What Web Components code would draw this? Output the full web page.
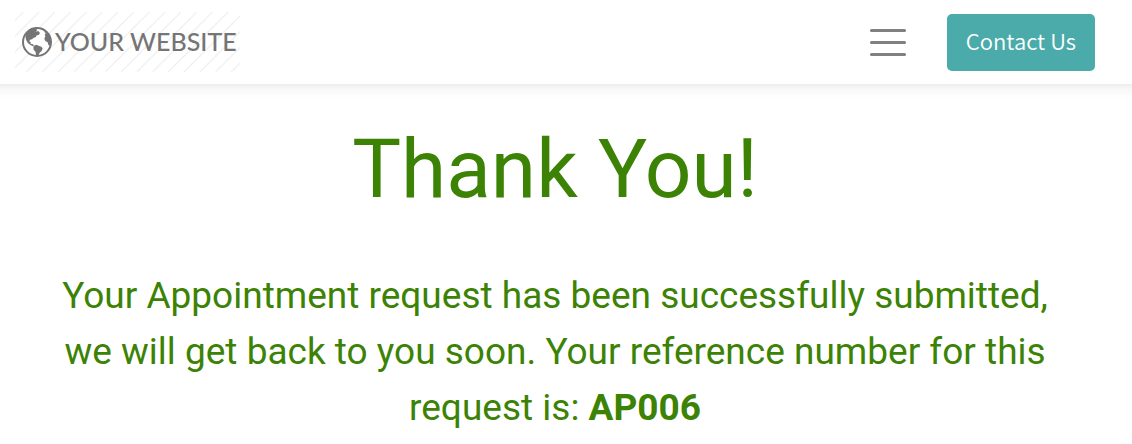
<!DOCTYPE html>
<html lang="en">
<head>
<meta charset="utf-8">
<meta name="viewport" content="width=device-width, initial-scale=1">
<title>Thank You</title>
<style>
body { margin: 0; background: #fff; font-family: Roboto, "Liberation Sans", sans-serif; }
.reference { white-space: nowrap; }
</style>
</head>
<body>
<site-header>
  <site-logo slot="brand">YOUR WEBSITE</site-logo>
  <menu-toggle></menu-toggle>
  <contact-button>Contact Us</contact-button>
</site-header>
<thank-you-message>
  <span slot="title">Thank You!</span>
  Your Appointment request has been successfully submitted, we will get back to you soon. Your reference number for this
  <span class="reference">request is: <b>AP006</b></span>
</thank-you-message>
<script>
function define(name, html) {
  customElements.define(name, class extends HTMLElement {
    constructor() {
      super();
      this.attachShadow({ mode: "open" }).innerHTML = html;
    }
  });
}

define("site-header", `
<style>
:host { display: block; }
:host::after { content: ""; display: block; height: 14px; background: linear-gradient(#eee, #f8f8f8 40%, #fff); }
header { display: flex; align-items: center; justify-content: space-between; box-sizing: border-box; min-height: 84px; padding: 0 37px 0 15px; background: #fff; }
.actions { display: flex; align-items: center; gap: 41px; }
</style>
<header><slot name="brand"></slot><div class="actions"><slot></slot></div></header>`);

define("site-logo", `
<style>
:host { display: block; }
a { display: grid; width: 225px; height: 60px; color: #757575; text-decoration: none; font: 500 25px/30px Lato, sans-serif; }
.stripes, .label { grid-area: 1 / 1; }
.label { display: flex; align-items: center; gap: 3px; padding-left: 7px; white-space: nowrap; }
.text { padding-bottom: 2px; }
.globe { flex: none; }
</style>
<a href="#">
  <svg class="stripes" width="225" height="60" aria-hidden="true">
    <defs><pattern id="hatch" width="15.75" height="60" x="11.5" patternUnits="userSpaceOnUse">
      <path d="M0 60L60 0M-15.75 60L44.25 0M-31.5 60L28.5 0M-47.25 60L12.75 0M-63 60L-3 0" stroke="#ececec" stroke-width="1"/>
    </pattern></defs>
    <rect width="225" height="60" fill="url(#hatch)"/>
  </svg>
  <span class="label">
    <svg class="globe" width="30" height="30" viewBox="0 0 90 90" fill="currentColor" aria-hidden="true">
      <circle cx="45" cy="45" r="42" fill="#fff" stroke="currentColor" stroke-width="6"/>
      <path d="M12 20L26 8L40 4L46 9L41 14L49 12L54 18L50 24L44 25L41 31L35 32L30 37L24 38L22 43L27 47L25 50L31 51L36 55L33 58L24 53L17 47L12 38L10 27Z"/>
      <path d="M36 56L43 53L50 56L58 59L62 64L59 72L53 77L49 86L42 85L41 75L35 68L34 61Z"/>
      <path d="M69 11L78 18L86 31L88 45L84 56L79 54L77 46L70 42L67 35L70 28L68 22L72 19L67 15Z"/>
    </svg>
    <span class="text"><slot></slot></span>
  </span>
</a>`);

define("menu-toggle", `
<style>
:host { display: block; }
button { display: flex; flex-direction: column; gap: 9px; margin: 0; padding: 0; border: 0; background: none; cursor: pointer; }
i { width: 36px; height: 3px; border-radius: 2px; background: #808080; }
</style>
<button type="button" aria-label="Menu"><i></i><i></i><i></i></button>`);

define("contact-button", `
<style>
:host { display: block; }
button { margin: 0; padding: 10px 19px 14px; border: 0; border-radius: 5px; background: #4aabaa; color: #fff; font: 350 22px/33px "Noto Sans CJK SC", "Noto Sans", sans-serif; cursor: pointer; }
</style>
<button type="button"><slot></slot></button>`);

define("thank-you-message", `
<style>
:host { display: block; padding: 21px 38px 0 16px; color: #3c8205; text-align: center; }
h1 { margin: 0; font-size: 82px; line-height: 100px; font-weight: 400; }
p { margin: 49px 0 0; padding: 0 32px; font-size: 37px; line-height: 56px; }
</style>
<h1><slot name="title"></slot></h1>
<p><slot></slot></p>`);
</script>
</body>
</html>
